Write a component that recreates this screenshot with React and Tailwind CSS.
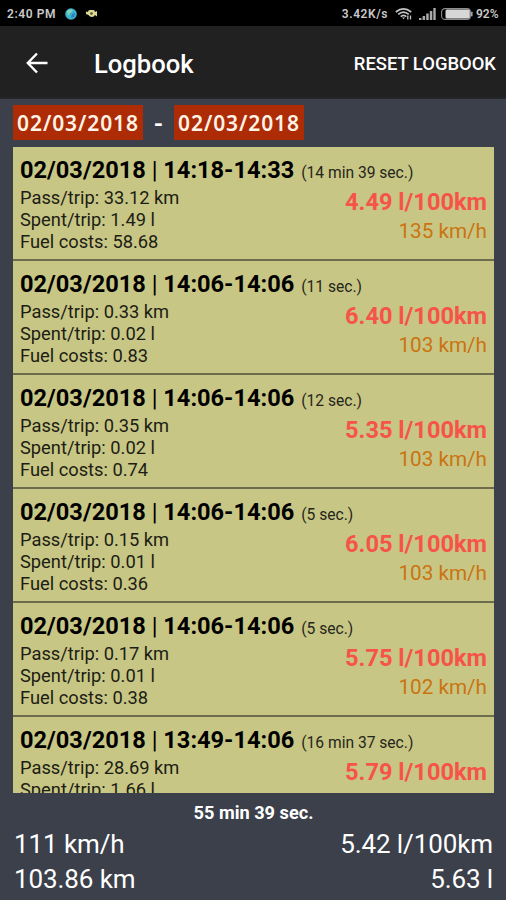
const trips = [
  { date: "02/03/2018", time: "14:18-14:33", duration: "14 min 39 sec.", pass: "33.12", spent: "1.49", cost: "58.68", rate: "4.49", speed: 135 },
  { date: "02/03/2018", time: "14:06-14:06", duration: "11 sec.", pass: "0.33", spent: "0.02", cost: "0.83", rate: "6.40", speed: 103 },
  { date: "02/03/2018", time: "14:06-14:06", duration: "12 sec.", pass: "0.35", spent: "0.02", cost: "0.74", rate: "5.35", speed: 103 },
  { date: "02/03/2018", time: "14:06-14:06", duration: "5 sec.", pass: "0.15", spent: "0.01", cost: "0.36", rate: "6.05", speed: 103 },
  { date: "02/03/2018", time: "14:06-14:06", duration: "5 sec.", pass: "0.17", spent: "0.01", cost: "0.38", rate: "5.75", speed: 102 },
  { date: "02/03/2018", time: "13:49-14:06", duration: "16 min 37 sec.", pass: "28.69", spent: "1.66", rate: "5.79" },
];

function StatusBar() {
  return (
    <div className="flex h-[26px] shrink-0 items-center bg-black pt-px pl-[7px] pr-[7px] text-[12px] font-semibold text-[#c9c9c9]">
      <span className="w-[50px] whitespace-nowrap tracking-[0.6px]">2:40 PM</span>
      <svg className="ml-2 h-3 w-3" viewBox="0 0 12 12">
        <circle cx="6" cy="6" r="5.8" fill="#3fb0cc" />
        <path d="M2 3 L6 1 L8 3 L5 5 L3 8 Z" fill="#7fd6b6" />
        <path d="M7 6 L10 5 L9 9 L6 10 Z" fill="#2a80bb" />
      </svg>
      <svg className="ml-[9px] h-[9px] w-3" viewBox="0 0 12 9">
        <path d="M0 2.5 L2 3 Q2 1 4 1 H7 Q9 1 9 3 L11 2 V7.5 L9 6 Q8 8 6 8 Q3.5 8 2.5 6 L0 5 Z" fill="#dcd993" />
        <circle cx="5.5" cy="4.5" r="1.3" fill="#4d5130" />
      </svg>
      <span className="ml-auto tracking-[0.55px]">3.42K/s</span>
      <svg className="ml-[7px] h-3 w-[17px]" viewBox="0 0 17 12" fill="none" stroke="#c4c4c4" strokeWidth="1.7">
        <path d="M.8 4 Q8.5 -2.2 16.2 4" />
        <path d="M3.2 6.4 Q8.5 1.8 13.8 6.4" />
        <path d="M5.7 8.7 Q8.5 6.2 11.3 8.7" />
        <path d="M7 9.5 H10 L8.5 11.3 Z" fill="#c4c4c4" stroke="none" />
        <path d="M12.8 7.5 V11.5 M15.5 7.5 V11.5" strokeWidth="1.3" />
      </svg>
      <svg className="ml-[7px] h-3 w-[17px]" viewBox="0 0 17 12" fill="#a9a9a9">
        <path d="M0 10h2.5v2H0zM3.6 8h2.5v4H3.6zM7.2 5.5h2.5V12H7.2zM10.8 3h2.5v9h-2.5zM14.3 0h2.4v12h-2.4z" />
      </svg>
      <svg className="ml-[5px] h-3 w-8" viewBox="0 0 32 12">
        <rect x=".6" y=".6" width="28.8" height="10.8" rx="3.5" fill="none" stroke="#8f8f8f" strokeWidth="1.1" />
        <rect x="4.5" y="1.4" width="24.3" height="9.2" rx="1.5" fill="#d7d7d7" />
        <rect x="30" y="3.5" width="1.6" height="5" rx=".8" fill="#a5a5a5" />
      </svg>
      <span className="ml-[3px] w-[23px] whitespace-nowrap">92%</span>
    </div>
  );
}

function Header() {
  return (
    <header className="flex h-[73px] shrink-0 items-center border-b-2 border-[#23252a] bg-[#212121] pl-[26px] pr-[10px] pt-[2px] text-white">
      <svg className="h-[22px] w-[22px]" viewBox="0 0 22 22" fill="none" stroke="white" strokeWidth="2.4">
        <path d="M21.5 11 H2 M11 1.5 L1.8 11 L11 20.5" />
      </svg>
      <h1 className="ml-[46px] pt-[3px] text-[25.6px] font-medium whitespace-nowrap">Logbook</h1>
      <button className="ml-auto pt-[3px] text-[18.4px] font-medium whitespace-nowrap">RESET LOGBOOK</button>
    </header>
  );
}

function DateButton({ children }) {
  return (
    <button className="flex h-[35px] w-[130px] items-center justify-center bg-[#ad2b05] pt-[3px] font-['Noto_Sans',sans-serif] text-[21px] font-semibold tracking-[0.9px] text-[#fff3e6]">
      {children}
    </button>
  );
}

function Trip({ trip }) {
  return (
    <li className="h-[114px] shrink-0 border-b-2 border-[#6e6c4f] pt-[9px] pr-[7px] pl-[7px] text-[#1c1d14]">
      <div className="flex h-[29px] items-baseline whitespace-nowrap leading-[29px] text-black">
        <span className="text-[23.6px] font-bold">
          {trip.date} <span className="font-normal">|</span> {trip.time}
        </span>
        <span className="ml-[7px] text-[15.6px] text-[#24251b]">({trip.duration})</span>
      </div>
      <div className="flex justify-between">
        <div className="pt-[2.4px] text-[18.3px] leading-[21.6px]">
          <p>Pass/trip: {trip.pass} km</p>
          <p>Spent/trip: {trip.spent} l</p>
          {trip.cost && <p>Fuel costs: {trip.cost}</p>}
        </div>
        <div className="pt-[2px] text-right">
          <p className="text-[23.6px] leading-[30px] font-bold text-[#f65349]">{trip.rate} l/100km</p>
          {trip.speed && <p className="text-[20.7px] leading-[29px] text-[#ca7410]">{trip.speed} km/h</p>}
        </div>
      </div>
    </li>
  );
}

export default function App() {
  return (
    <div className="flex h-[900px] w-[506px] flex-col overflow-hidden bg-[#3b404b] font-[Roboto,sans-serif]">
      <StatusBar />
      <Header />
      <div className="flex h-12 shrink-0 items-start pt-[6px] pl-[13px]">
        <DateButton>02/03/2018</DateButton>
        <span className="w-[31px] pt-[2px] text-center text-[24px] leading-[35px] font-bold text-white">-</span>
        <DateButton>02/03/2018</DateButton>
      </div>
      <ul className="mr-3 ml-[13px] flex h-[646px] shrink-0 flex-col overflow-hidden bg-[#c8c684]">
        {trips.map((trip, i) => <Trip key={i} trip={trip} />)}
      </ul>
      <footer className="pr-[13px] pl-[14px] text-white">
        <p className="pt-[7px] text-center text-[18.2px] leading-[26px] font-bold">55 min 39 sec.</p>
        <div className="flex justify-between pt-px text-[26px] leading-[35px] tracking-[-0.1px]">
          <div>
            <p>111 km/h</p>
            <p>103.86 km</p>
          </div>
          <div className="text-right">
            <p>5.42 l/100km</p>
            <p>5.63 l</p>
          </div>
        </div>
      </footer>
    </div>
  );
}
